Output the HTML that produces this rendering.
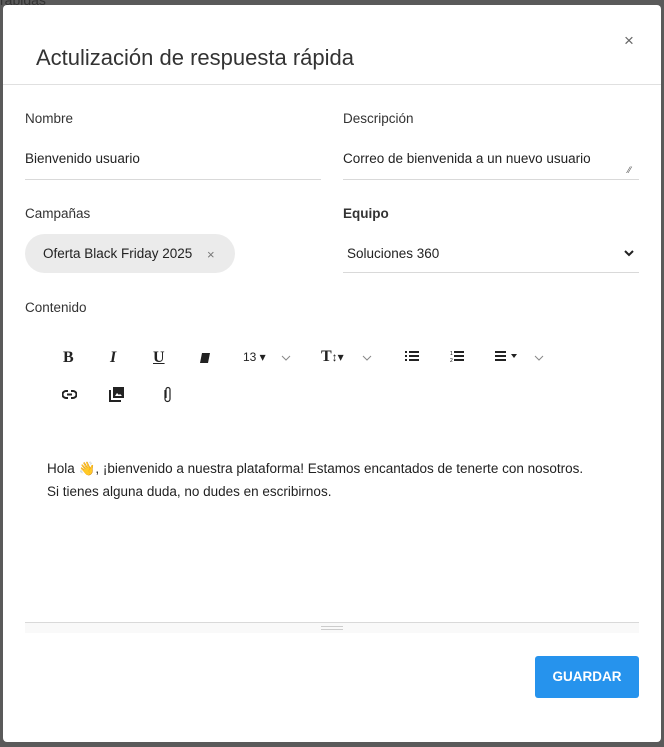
<!DOCTYPE html><html><head><meta charset="utf-8"><style>
*{margin:0;padding:0;box-sizing:border-box}
body{width:664px;height:747px;background:#5a5a5a;font-family:"Liberation Sans","Noto Sans CJK JP",sans-serif;color:#222;position:relative;overflow:hidden;font-size:13.5px}
.bgtxt{position:absolute;left:0;top:-8px;color:#333;font-size:14px}
.m{position:absolute;left:3px;top:5px;width:658px;height:737px;background:#fff;border-radius:4px}
.a{position:absolute;white-space:nowrap}
.line{position:absolute;height:1px;background:#d9d9d9}
.ic{position:absolute;color:#333}
</style></head><body>
<div class="bgtxt">rápidas</div>
<div class="m">
<div class="a" style="left:33px;top:40px;font-size:22px;color:#333">Actulización de respuesta rápida</div>
<div class="a" style="left:621px;top:26px;font-size:17px;color:#666">×</div>
<div class="line" style="left:0;top:79px;width:658px;background:#e0e0e0"></div>
<div class="a" style="left:22px;top:106px;color:#333">Nombre</div>
<div class="a" style="left:340px;top:106px;color:#333">Descripción</div>
<div class="a" style="left:22px;top:146px">Bienvenido usuario</div>
<div class="line" style="left:22px;top:174px;width:296px"></div>
<div class="a" style="left:340px;top:146px">Correo de bienvenida a un nuevo usuario</div>
<div class="a" style="left:625px;top:160px;font-size:9px;color:#555">⁄⁄</div>
<div class="line" style="left:340px;top:174px;width:296px"></div>
<div class="a" style="left:22px;top:201px;color:#333">Campañas</div>
<div class="a" style="left:340px;top:201px;font-weight:bold;color:#333">Equipo</div>
<div class="a" style="left:22px;top:229px;width:210px;height:39px;background:#ebebeb;border-radius:20px"></div>
<div class="a" style="left:40px;top:241px">Oferta Black Friday 2025</div>
<div class="a" style="left:204px;top:242px;color:#777;font-size:13px">×</div>
<div class="a" style="left:344px;top:241px">Soluciones 360</div>
<svg class="ic" style="left:621px;top:244px" width="10" height="8"><path d="M1 2l4 4 4-4" stroke="#222" stroke-width="2" fill="none"/></svg>
<div class="line" style="left:340px;top:267px;width:296px"></div>
<div class="a" style="left:22px;top:295px;color:#333">Contenido</div>
<div class="a" style="left:60px;top:344px;font-family:'Liberation Serif',serif;font-weight:bold;font-size:16px">B</div>
<div class="a" style="left:107px;top:344px;font-family:'Liberation Serif',serif;font-weight:bold;font-style:italic;font-size:16px">I</div>
<div class="a" style="left:150px;top:344px;font-family:'Liberation Serif',serif;font-weight:bold;text-decoration:underline;font-size:16px">U</div>
<svg class="ic" style="left:196px;top:347px" width="12" height="12"><path d="M3 1h8l-2 10H1z" fill="#222"/></svg>
<div class="a" style="left:240px;top:345px;font-size:12px">13 ▾</div>
<svg class="ic" style="left:278px;top:350px" width="10" height="7"><path d="M1 1l4 4 4-4" stroke="#888" fill="none"/></svg>
<div class="a" style="left:318px;top:343px;font-family:'Liberation Serif',serif;font-weight:bold;font-size:16px">T<span style="font-size:12px;font-weight:normal">↕▾</span></div>
<svg class="ic" style="left:359px;top:350px" width="10" height="7"><path d="M1 1l4 4 4-4" stroke="#888" fill="none"/></svg>
<svg class="ic" style="left:402px;top:346px" width="14" height="11"><path d="M0 1h2M0 5h2M0 9h2M4 1h10M4 5h10M4 9h10" stroke="#222" stroke-width="2"/></svg>
<svg class="ic" style="left:447px;top:345px" width="14" height="13"><text x="0" y="5" font-size="5">1</text><text x="0" y="12" font-size="5">2</text><path d="M4 2h10M4 6h10M4 10h10" stroke="#222" stroke-width="2"/></svg>
<svg class="ic" style="left:492px;top:346px" width="24" height="11"><path d="M0 1h11M0 5h11M0 9h11" stroke="#222" stroke-width="2"/><path d="M16 3h6l-3 4z" fill="#222"/></svg>
<svg class="ic" style="left:531px;top:350px" width="10" height="7"><path d="M1 1l4 4 4-4" stroke="#888" fill="none"/></svg>
<svg class="ic" style="left:59px;top:385px" width="15" height="9"><path d="M6 1H4a3.5 3.5 0 000 7h2M9 1h2a3.5 3.5 0 010 7H9M5 4.5h5" stroke="#222" stroke-width="2" fill="none"/></svg>
<svg class="ic" style="left:106px;top:381px" width="16" height="16"><path d="M4 1h11v11H4z" fill="#222"/><path d="M1 4v11h11" stroke="#222" stroke-width="2" fill="none"/><path d="M6 10l2-3 2 2 1-1 2 2z" fill="#fff"/></svg>
<svg class="ic" style="left:159px;top:381px" width="10" height="17"><path d="M3 4v9a2.5 2.5 0 005 0V3.5a2 2 0 00-4 0V12" stroke="#222" stroke-width="1.2" fill="none"/></svg>
<div class="a" style="left:44px;top:452px;line-height:23px">Hola 👋, ¡bienvenido a nuestra plataforma! Estamos encantados de tenerte con nosotros.<br>Si tienes alguna duda, no dudes en escribirnos.</div>
<div class="line" style="left:22px;top:617px;width:614px"></div>
<div class="a" style="left:22px;top:618px;width:614px;height:10px;background:#f9f9f9"></div>
<div class="a" style="left:318px;top:621px;width:22px;height:4px;border-top:1px solid #ccc;border-bottom:1px solid #ccc"></div>
<div class="a" style="left:532px;top:651px;width:104px;height:42px;background:#2693ed;border-radius:3px;color:#fff;font-weight:bold;font-size:13.5px;text-align:center;line-height:42px">GUARDAR</div>
</div>
</body></html>
